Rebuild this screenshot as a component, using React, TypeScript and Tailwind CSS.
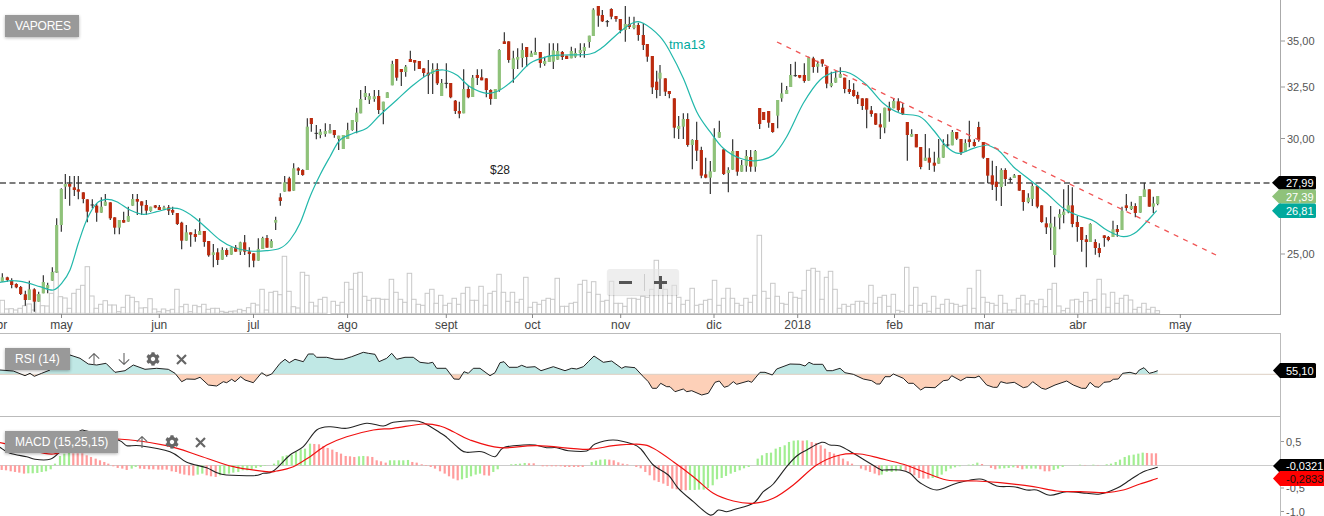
import { FaCog } from "react-icons/fa";

type P = [number, number];
const conv = (ox: number, oy: number, pts: number[]): P[] => {
  const out: P[] = [];
  for (let i = 0; i < pts.length; i += 2) out.push([ox + pts[i] / 3, oy + pts[i + 1] / 3]);
  return out;
};
const smooth = (p: P[]) => {
  let d = `M${p[0][0].toFixed(1)} ${p[0][1].toFixed(1)}`;
  for (let i = 0; i < p.length - 1; i++) {
    const a = p[i - 1] || p[i], b = p[i], c = p[i + 1], e = p[i + 2] || c;
    const c1x = b[0] + (c[0] - a[0]) / 6, c1y = b[1] + (c[1] - a[1]) / 6;
    const c2x = c[0] - (e[0] - b[0]) / 6, c2y = c[1] - (e[1] - b[1]) / 6;
    d += `C${c1x.toFixed(1)} ${c1y.toFixed(1)} ${c2x.toFixed(1)} ${c2y.toFixed(1)} ${c[0].toFixed(1)} ${c[1].toFixed(1)}`;
  }
  return d;
};
const poly = (p: P[]) => p.map((q) => q[0].toFixed(1) + "," + q[1].toFixed(1)).join(" ");

// candles: zoomX, bodyTop, bodyBottom, wickTop, wickBottom, kind (1 green, 0 red, 2 doji)
const C1 = [[7,352,365,340,365,1],[22,352,360,350,365,0],[35,362,375,355,385,0],[49,372,382,370,385,0],[62,381,402,378,405,0],[76,403,420,392,437,0],[88,388,420,362,420,1],[103,388,425,385,455,0],[116,402,425,395,425,1],[130,366,400,346,400,1],[143,375,385,368,400,1],[157,336,362,322,362,1],[170,195,338,175,338,1],[184,87,195,85,215,1],[196,72,80,42,117,1],[209,72,80,48,137,0],[223,82,90,48,108,0],[235,88,95,48,118,0],[250,97,117,97,130,0],[262,118,155,118,187,0],[277,135,135,118,145,2],[290,137,158,130,185,0],[304,140,158,112,158,1],[316,125,137,102,137,1],[331,127,175,127,180,0],[344,172,203,172,223,0],[358,180,203,180,223,1],[371,180,188,155,188,0],[385,168,185,140,185,1],[398,117,137,102,137,1],[412,117,125,102,165,0],[425,124,137,124,165,0],[439,135,152,120,165,0],[452,140,153,140,155,1],[466,136,143,135,145,0],[478,141,150,135,150,0],[492,142,148,137,150,1],[506,142,152,135,165,0],[518,150,158,140,165,0],[532,159,192,159,195,0],[545,188,242,185,268,0],[559,217,242,195,242,1],[572,217,224,217,260,0],[586,222,231,208,245,0],[599,213,225,175,225,1],[613,213,246,213,260,0],[626,243,286,243,290,0],[640,277,285,252,322,1],[653,277,300,265,315,0],[667,270,299,262,299,1],[680,270,285,265,290,0],[694,262,284,262,284,1],[707,262,275,255,275,0],[721,247,275,245,285,1],[734,247,275,225,285,0],[748,274,282,262,322,0],[761,280,302,280,322,0],[775,267,302,235,302,1],[788,234,267,230,267,1],[801,234,263,225,263,0],[814,243,263,238,263,1],[827,180,188,170,210,1],[841,112,123,100,137,0],[854,67,95,48,95,1],[868,55,94,50,94,0],[881,25,92,10,92,1],[895,25,32,22,45,0],[908,30,45,28,47,0]];
const C1b = [[922,380,510,355,510,1],[934,354,372,354,395,0],[949,400,400,375,418,2],[961,395,405,387,415,1],[976,393,402,370,410,1]];
const C3 = [[0,390,400,372,400,1],[13,390,405,390,413,0],[26,407,417,407,450,1],[40,405,447,405,447,1],[53,390,417,368,417,1],[67,360,390,360,392,1],[80,338,366,323,400,1],[92,297,340,270,340,1],[106,279,291,258,300,1],[118,288,299,280,312,1],[133,289,297,270,305,1],[146,288,330,270,342,0],[160,305,330,305,373,1],[172,277,294,277,294,1],[187,192,256,182,256,1],[200,177,233,177,242,0],[214,207,216,207,258,0],[227,200,216,195,230,1],[241,177,186,152,186,0],[254,180,188,180,212,0],[268,183,207,183,207,0],[281,205,219,205,230,0],[295,218,226,180,282,0],[308,208,222,190,282,1],[322,207,250,190,255,0],[335,249,288,237,288,1],[349,250,250,190,265,2],[362,249,292,249,295,0],[376,302,333,300,342,0],[388,333,341,305,355,0],[401,267,340,208,340,1],[415,267,292,255,295,0],[428,233,291,225,291,1],[442,225,234,208,255,0],[455,232,241,208,241,0],[469,235,270,235,292,0],[482,270,297,268,314,0],[496,267,297,267,297,1],[508,150,270,148,275,1],[523,124,132,97,132,0],[536,124,180,124,188,0],[550,175,207,152,248,1],[563,171,179,145,207,1],[577,150,174,130,202,1],[590,141,171,141,200,0],[604,160,171,152,171,1],[616,156,165,113,165,1],[631,156,189,156,203,0],[644,183,192,170,197,1],[658,167,186,130,186,1],[670,151,185,130,207,1],[683,153,179,130,179,1],[697,156,171,153,180,0],[710,167,177,167,177,0],[724,153,175,140,175,1],[736,159,170,145,173,1],[751,150,159,130,172,1],[763,141,153,130,173,1],[778,107,126,107,143,1],[790,29,108,25,108,1],[805,18,47,18,80,0],[817,45,64,30,66,0],[832,65,65,60,80,2],[844,27,50,25,58,0],[858,48,57,48,65,0],[871,57,90,57,100,0],[886,72,90,18,125,1],[898,72,81,50,87,0],[912,75,84,50,88,1],[925,75,105,68,122,0],[940,105,135,70,150,0],[952,132,170,132,185,0],[967,168,262,168,282,0],[980,245,270,212,295,0]];
const C4 = [[0,218,236,195,288,1],[16,235,275,235,288,0],[28,273,282,273,295,0],[43,295,383,295,415,0],[56,378,387,348,417,1],[70,357,380,340,417,1],[83,357,435,340,440,0],[97,420,435,418,508,1],[110,420,452,365,483,0],[124,450,527,440,535,0],[137,523,533,473,535,0],[151,514,533,483,582,1],[163,415,515,385,515,1],[178,396,413,362,413,1],[191,448,522,448,525,0],[205,510,519,502,577,1],[218,453,509,418,509,1],[232,453,515,453,527,0],[245,495,515,480,515,1],[259,468,497,450,515,1],[272,471,500,450,515,0],[286,453,500,450,515,1],[299,324,372,324,387,0],[311,336,360,336,360,0],[326,333,368,333,383,0],[338,369,396,369,398,0],[353,300,347,300,385,1],[365,280,295,248,305,1],[380,270,282,258,282,1],[392,225,261,192,261,1],[406,227,227,185,230,2],[419,225,233,225,235,0],[433,225,243,190,248,0],[446,172,242,170,242,1],[460,175,201,170,218,0],[473,191,200,182,218,1],[487,178,191,178,200,0],[500,201,251,198,265,0],[514,249,258,215,262,1],[527,233,248,212,248,1],[541,222,233,202,233,1],[554,233,267,233,280,0],[568,267,276,240,282,0],[581,270,288,250,290,0],[593,285,296,275,312,0],[607,295,318,295,330,0],[620,295,329,295,385,0],[634,331,342,318,350,0],[647,340,374,340,375,0],[661,373,382,340,417,0],[674,323,383,323,400,1],[688,323,332,305,365,0],[701,303,325,295,325,1],[715,304,330,295,335,0],[728,323,343,310,345,0],[742,366,405,366,482,0],[755,402,410,388,410,1],[769,402,442,402,442,0],[782,441,501,441,508,0],[796,473,482,402,482,1],[808,473,488,445,510,0],[823,488,497,455,515,0],[836,473,491,417,491,1],[850,435,473,418,473,1],[863,435,435,403,440,2],[877,396,436,390,436,1],[890,396,416,396,420,0],[903,417,457,417,465,0],[916,429,455,418,455,1],[928,418,426,362,442,0],[943,426,438,418,440,0],[956,381,420,365,425,0],[970,426,473,426,476,0],[983,474,527,474,550,0]];
const C5 = [[7,226,254,182,270,0],[19,245,261,198,302,0],[34,210,261,205,318,1],[46,210,237,205,258,0],[61,238,238,232,248,2],[73,226,234,222,234,1],[88,225,272,225,272,0],[100,270,306,270,332,0],[115,293,306,280,310,1],[127,258,297,250,318,1],[142,258,320,258,325,0],[155,316,366,316,368,0],[169,370,382,352,402,0],[182,370,383,318,450,1],[194,380,465,350,502,1],[209,342,353,328,388,1],[221,335,345,268,370,1],[235,316,337,255,340,1],[247,316,372,262,382,0],[262,366,381,348,425,0],[275,381,420,381,455,0],[289,418,426,405,502,0],[301,372,426,370,426,1],[316,426,444,418,464,0],[328,444,459,430,472,0],[343,406,414,406,440,0],[355,411,420,408,424,0],[369,388,411,362,411,1],[382,387,396,375,410,0],[396,332,390,320,390,1],[409,316,324,282,332,0],[424,318,327,305,330,1],[436,318,339,310,352,0],[451,288,338,288,338,1],[463,268,291,248,291,1],[478,268,320,268,320,0],[490,310,320,290,340,1],[503,288,312,288,316,1]];
const candles = [
  ...C1.map((c) => [0, 160, c] as const),
  ...C1b.map((c) => [0, 0, c] as const),
  ...C3.map((c) => [330, 0, c] as const),
  ...C4.map((c) => [660, 0, c] as const),
  ...C5.map((c) => [990, 100, c] as const),
];

// volume: origin x, origin y, left zoom x of first bar, tops
const volumes: [number, number, number, number[]][] = [
  [0, 160, 0, [421,447,446,450,445,437,432,450,405,437,438,400,335,410,414,445,400,388,376,320,408,445,433,422,435,435,455,442,406,412,425,444,443,416,447,455,447,452,448,388,440,433,455,436,440,433,448,445,445,454,457,454,453,448,452,443,430,435,388,450,397,394,404,289,394,440,444,337,346,427,438,418,412]],
  [330, 240, 3, [184,196,187,127,148,100,97,169,181,175,175,178,178,118,157,178,187,100,178,193,196,160,148,190,166,196,190,175,193,160,142,181,181,139,196,160,154,103,157,184,157,187,178,112,202,187,193,181,175,178,115]],
  [560, 170, 0, [409,409,400,397,343,331,367,335,373,394,391,334,400,400,409,385,385,388,379,382,358,271,337,358,400,346,382,403,391,355,406,403,391,388,331,406,385,355,385,400,406,385,397,376,196,364,385,340,379,400,403,367,382,385,361,301,295,304,388,322]],
  [830, 240, -5, [94,148,205,193,199,193,184,184,190,136,190,172,166,199,163,211,214,82,196,142,196,190,214,169,205,193,178,190,193,199,196,145,205,91,172,187,190,196]],
  [990, 100, 25, [586,610,630,630,595,586,612,602,612,598,620,568,550,618,632,625,600,598,605,577,602,598,538,582,622,577,610,595,586,600,628,622,610,628,622,632]],
];
const volBase = [460, 221, 431, 221, 640];

const tma = [
  ...conv(0, 160, [0,367,40,362,80,368,120,380,160,390,185,370,210,330,235,250,260,180,290,130,320,118,350,125,390,150,430,163,470,155,510,145,540,147,580,170,620,205,660,240,700,262,750,273,800,272,840,265,870,240,900,190,930,110,960,45]),
  ...conv(330, 0, [0,470,30,420,70,400,110,385,150,345,200,300,250,255,300,220,340,210,380,225,420,260,470,280,510,270,550,240,600,190,650,170,700,165,780,162,820,140,870,95,910,68,940,70]),
  ...conv(660, 0, [0,110,30,155,70,235,110,335,150,395,190,445,240,475,290,482,340,465,380,410,430,310,480,240,530,215,570,220,620,255,670,310,720,340,780,350,820,390,860,440,895,460,940,445,980,435]),
  ...conv(990, 100, [0,138,30,155,70,200,120,240,170,280,220,325,260,345,310,362,350,390,400,410,440,395,500,332]),
];

const rsi = [
  ...conv(0, 330, [0,120,40,123,75,137,90,130,103,139,125,130,150,120,175,80,210,75,240,85,265,102,290,105,318,100,345,127,375,122,400,105,435,118,470,115,505,118,525,130,545,155,560,147,585,148,600,142,625,165,650,168,670,155,680,158,695,148,705,155,722,140,735,150,760,158,785,128,800,138,815,132,840,100,855,88,868,98,885,88,910,95,925,72,940,72,950,82,980,82,1005,88,1030,88,1055,80,1090,67,1105,70,1125,73,1137,95,1160,85,1175,70,1190,88,1215,82,1240,82,1260,97,1285,100,1298,97,1310,115]),
  ...conv(440, 330, [0,115,18,115,42,147,58,148,72,125,85,130,100,115,120,115,150,137,165,128,180,98,192,95,207,112,232,112,245,106,260,112,285,110,303,122,340,110,375,122,395,115,410,117,430,110,445,95,462,78,490,97,515,93,545,115,555,110,585,113,610,140,625,155,637,175,650,175,662,160,680,170,690,170,705,185,730,177,740,185,755,182,785,195,805,190,825,157,838,153,853,172,865,168,880,155,890,163,925,153,935,157,960,127,975,127,997,135,1010,117,1050,102,1080,103,1095,108,1107,97,1120,103,1148,103,1160,122,1177,122,1200,115,1215,128,1240,133,1270,147,1295,152,1310,162]),
  ...conv(880, 330, [0,162,15,140,30,140,40,132,70,145,85,160,100,160,122,180,135,172,165,173,190,152,205,150,215,137,242,152,260,142,285,143,297,138,320,165,340,172,352,172,362,155,380,160,403,157,430,173,443,170,458,155,485,175,497,178,525,165,560,153,580,165,605,175,618,175,630,157,645,170,657,172,672,157,690,155,700,148,715,147,728,130,750,127,768,132,778,120,792,113,808,130,820,127,833,122]),
];

const macd = [
  ...conv(0, 330, [0,352,30,370,80,380,105,388,150,388,175,370,205,330,240,303,260,303,355,330,380,347,420,347,510,365,560,397,620,413,665,433,760,437,790,430,820,423,870,375,910,350,950,300,990,290,1040,295,1100,280,1150,288,1180,277,1240,272,1270,278]),
  ...conv(440, 330, [0,308,20,322,60,358,80,367,125,365,165,380,190,353,250,345,285,345,320,353,350,353,385,362,440,363,465,342,520,330,580,343,605,360,640,405,685,435,715,475,760,515,810,555,835,540,860,545,885,538,940,520,970,485,1000,462,1040,410,1070,378,1100,360,1145,337,1170,345,1200,348,1240,370]),
  ...conv(880, 330, [0,418,10,420,60,420,90,430,120,458,170,480,230,460,300,447,350,468,400,470,440,480,470,480,510,496,560,485,620,490,660,492,710,475,750,450,790,425,833,412]),
];
const signal = [
  ...conv(0, 330, [0,338,80,355,160,372,250,340,353,327,500,347,600,378,700,410,800,425,830,423,880,410,930,380,980,345,1040,320,1120,300,1180,295,1270,282]),
  ...conv(440, 330, [0,288,40,305,90,330,180,353,290,347,440,358,520,347,600,343,640,355,700,395,760,440,820,490,880,513,940,520,1000,505,1060,465,1130,405,1200,375,1260,372]),
  ...conv(880, 330, [0,385,70,403,130,425,200,450,290,453,360,458,460,470,530,483,600,485,680,488,730,480,780,462,833,445]),
];

const hist: P[] = [
  ...conv(0, 0, [5,-14,18,-15,32,-18,45,-20,58,-22,72,-25,85,-24,98,-24,112,-23,125,-20,138,-18,152,-12,165,5,180,28,193,35,207,37,220,36,233,36,247,36,260,30,273,25,287,20,300,15,313,10,325,5,340,-3,353,-8,367,-10,380,-14,395,-10,407,-5,420,-10,433,-11,447,-12,460,-12,475,-13,487,-13,500,-13,515,-18,528,-20,540,-25,553,-28,567,-30,580,-31,593,-28,607,-25,620,-30,633,-33,647,-35,660,-30,673,-28,687,-25,700,-22,715,-20,728,-15,742,-15,755,-12,768,-8,782,-5,795,-2,822,5,835,15,848,27,860,30,875,32,888,40,902,48,915,50,930,65,943,64,957,63,970,58,983,52,997,47,1010,40,1023,35,1037,28,1050,27,1063,25,1077,27,1090,28,1103,27,1117,25,1130,15,1143,12,1157,8,1170,15,1183,15,1197,15,1210,15,1224,16,1237,10,1250,8,1265,3,1278,-2,1292,-5,1305,-10]),
  ...conv(440, 0, [0,-18,14,-25,27,-33,40,-40,53,-45,66,-42,80,-38,93,-33,107,-28,120,-25,133,-30,147,-31,160,-20,173,-12,214,3,227,4,240,5,254,7,267,6,281,6,308,-3,321,-3,335,-3,348,-3,362,-3,375,-5,388,-5,402,-5,415,-5,428,-5,455,10,468,14,481,17,495,18,508,17,521,15,535,9,548,5,562,3,589,-5,602,-9,616,-20,629,-30,643,-45,656,-50,670,-55,683,-62,697,-70,710,-72,724,-74,737,-75,750,-74,764,-74,777,-73,791,-73,804,-68,818,-60,831,-42,845,-38,858,-32,872,-25,885,-20,899,-15,912,-9,926,-5,953,20,966,30,980,37,993,38,1007,50,1020,55,1034,60,1047,70,1061,74,1074,75,1088,74,1101,75,1115,70,1128,67,1142,60,1155,50,1169,40,1182,35,1196,30,1209,20,1223,12,1236,5,1263,-10,1277,-15,1290,-20,1304,-25,1317,-30]),
  ...conv(880, 0, [5,-28,20,-20,35,-20,48,-18,62,-15,77,-16,90,-22,103,-30,117,-38,130,-40,145,-40,158,-38,172,-35,185,-28,198,-18,212,-10,225,-6,239,-3,266,2,279,3,292,8,306,4,333,-8,346,-12,359,-10,373,-9,386,-8,400,-6,413,-8,427,-12,440,-10,454,-10,467,-10,481,-12,494,-18,508,-18,521,-14,534,-10,548,-5,600,2,615,1,640,2,654,1,680,3,693,5,707,10,720,17,734,25,747,30,761,32,775,35,788,38,801,37,815,36,828,36]),
];

const months: [string, number][] = [["abr",-1.5],["may",61.5],["jun",159.3],["jul",253.5],["ago",347.6],["sept",446.3],["oct",532.5],["nov",620.7],["dic",714],["2018",797.7],["feb",894.5],["mar",984.5],["abr",1077.8],["may",1180.3]];
const prices: [string, number][] = [["35,00",41],["32,50",87],["30,00",138.5],["25,00",254]];
const macdTicks: [string, number][] = [["0,5",441.5],["-0,5",488],["-1,0",511.5]];

const Tag = ({ y, h, end, fill, text, tc = "#fff", tip = 1272 }: any) => {
  const m = y + h / 2;
  return (
    <g>
      <path d={`M${tip} ${m}L${tip + 7} ${y}H${end - 1.5}Q${end} ${y} ${end} ${y + 1.5}V${y + h - 1.5}Q${end} ${y + h} ${end - 1.5} ${y + h}H${tip + 7}Z`} fill={fill} />
      <text x={1286} y={m + 4} fontSize={11} fill={tc}>{text}</text>
    </g>
  );
};

const ArrowUpI = () => (
  <svg viewBox="0 0 12 12" className="w-3 h-3" fill="none" stroke="#666" strokeWidth="1.1">
    <path d="M6 .6V12M.8 5.6 6 .6l5.2 5" />
  </svg>
);
const ArrowDownI = () => (
  <svg viewBox="0 0 12 12" className="w-3 h-3" fill="none" stroke="#666" strokeWidth="1.1">
    <path d="M6 0V11.4M.8 6.4 6 11.4l5.2-5" />
  </svg>
);
const CloseI = () => (
  <svg viewBox="0 0 11 11" className="w-[11px] h-[11px]" fill="none" stroke="#666" strokeWidth="2.2">
    <path d="M1 1l9 9M10 1l-9 9" />
  </svg>
);
const Label = ({ children, tight }: any) => (
  <div className={tight ? "bg-[#999] text-white text-[12px] leading-[16px] pl-[10px] pr-[8px] py-[3px] tracking-[-0.2px] shadow-[0_1px_3px_rgba(0,0,0,0.3)] whitespace-nowrap" : "bg-[#999] text-white text-[12px] leading-[16px] px-[10px] py-[3px] shadow-[0_1px_3px_rgba(0,0,0,0.3)] whitespace-nowrap"}>{children}</div>
);

export default function App() {
  return (
    <div className="relative w-[1324px] h-[516px] overflow-hidden bg-white font-['Liberation_Sans',Arial,sans-serif]">
      <div className="h-[333px] relative">
        <div className="w-[1281px] h-[315px] border-r border-b border-[#aaa]" />
        <svg className="absolute inset-0" width={1324} height={333} viewBox="0 0 1324 333" fontFamily="'Liberation Sans', Arial, sans-serif">
          {volumes.map(([ox, oy, s, tops], si) =>
            tops.map((t, k) => {
              const y = oy + t / 3;
              const base = oy + volBase[si] / 3;
              return <rect key={si + "-" + k} x={(ox + (s + k * 13.44) / 3).toFixed(1)} y={y.toFixed(1)} width={4.48} height={Math.max(0, base - y).toFixed(1)} fill="#fff" stroke="#c8c8c8" strokeWidth={1} />;
            })
          )}
          <line x1={0} x2={1273} y1={183} y2={183} stroke="#7c7c7c" strokeWidth={2} strokeDasharray="6 3.5" />
          {candles.map(([ox, oy, c], i) => {
            const x = ox + (c[0] as number) / 3;
            const col = c[5] === 1 ? "#8fc27a" : "#bb2a0e";
            return (
              <g key={i}>
                <line x1={x} x2={x} y1={oy + (c[3] as number) / 3} y2={oy + (c[4] as number) / 3} stroke="#333" strokeWidth={1.2} />
                {c[5] === 2 ? (
                  <line x1={x - 1.8} x2={x + 1.8} y1={oy + (c[1] as number) / 3} y2={oy + (c[1] as number) / 3} stroke="#333" strokeWidth={1} />
                ) : (
                  <rect x={x - 1.6} width={3.2} y={oy + (c[1] as number) / 3} height={((c[2] as number) - (c[1] as number)) / 3} fill={col} />
                )}
              </g>
            );
          })}
          <path d={smooth(tma)} fill="none" stroke="#22b8ab" strokeWidth={1.2} />
          <line x1={777} y1={42} x2={1216} y2={255} stroke="#f05555" strokeWidth={1.3} strokeDasharray="5 5.5" />
          <text x={490} y={174} fontSize={12} fill="#222">$28</text>
          <text x={669} y={49} fontSize={13} fill="#00a99d">tma13</text>
          {months.map(([m, x], i) => (
            <g key={i}>
              <line x1={x} x2={x} y1={314} y2={318} stroke="#888" />
              <text x={x} y={329} fontSize={12} fill="#444" textAnchor="middle">{m}</text>
            </g>
          ))}
          {prices.map(([p, y]) => (
            <g key={p}>
              <line x1={1281} x2={1285} y1={y} y2={y} stroke="#999" />
              <text x={1287} y={y + 4} fontSize={11} fill="#555">{p}</text>
            </g>
          ))}
          <Tag y={176} h={13.5} end={1316} fill="#000" text="27,99" />
          <Tag y={189.5} h={14} end={1316} fill="#8fc27a" text="27,39" />
          <Tag y={203.5} h={14.5} end={1316} fill="#00a99d" text="26,81" />
        </svg>
        <div className="absolute left-[5px] top-[15px]"><Label tight>VAPORES</Label></div>
        <div className="absolute left-[607px] top-[269px] w-[72px] h-[26px] bg-[#e2e2e2]/60 rounded-[3px] shadow-[0_1px_1px_rgba(0,0,0,0.12)] flex items-center pl-[12px]">
          <div className="w-[13px] h-[3px] bg-[#555]" />
          <div className="ml-[12px] w-px h-[17px] bg-[#ccc]" />
          <div className="ml-[9px] relative w-[13px] h-[13px]">
            <div className="absolute left-0 top-[5px] w-[13px] h-[3px] bg-[#555]" />
            <div className="absolute left-[5px] top-0 w-[3px] h-[13px] bg-[#555]" />
          </div>
        </div>
      </div>

      <div className="h-[83px] relative">
        <div className="w-[1281px] h-[84px] border-t border-r border-[#bbb]" />
        <svg className="absolute inset-0" width={1324} height={83} viewBox="0 333 1324 83" fontFamily="'Liberation Sans', Arial, sans-serif">
          <defs>
            <clipPath id="rsiUp"><rect x={0} y={333} width={1280} height={41.3} /></clipPath>
            <clipPath id="rsiDown"><rect x={0} y={374.3} width={1280} height={42} /></clipPath>
          </defs>
          <polygon points={`0,374.3 ${poly(rsi)} ${rsi[rsi.length - 1][0].toFixed(1)},374.3`} fill="#c0e8e5" clipPath="url(#rsiUp)" />
          <polygon points={`0,374.3 ${poly(rsi)} ${rsi[rsi.length - 1][0].toFixed(1)},374.3`} fill="#fdd0b8" clipPath="url(#rsiDown)" />
          <line x1={0} x2={1280} y1={374.3} y2={374.3} stroke="#dccfc2" />
          <polyline points={poly(rsi)} fill="none" stroke="#222" strokeWidth={1} />
          <Tag y={363} h={15} end={1316} fill="#000" text="55,10" tip={1273} />
        </svg>
        <div className="absolute left-[5px] top-[15px] flex items-center">
          <Label>RSI (14)</Label>
          <div className="ml-[18px]"><ArrowUpI /></div>
          <div className="ml-[18px]"><ArrowDownI /></div>
          <FaCog className="ml-[16px] text-[#666] text-[14px]" />
          <div className="ml-[16px]"><CloseI /></div>
        </div>
      </div>

      <div className="h-[100px] relative">
        <div className="w-[1281px] h-[100px] border-t border-r border-[#bbb]" />
        <svg className="absolute inset-0" width={1324} height={100} viewBox="0 416 1324 100" fontFamily="'Liberation Sans', Arial, sans-serif">
          <line x1={0} x2={1280} y1={465.5} y2={465.5} stroke="#ccc" />
          {hist.map((h, i) => {
            const v = h[1];
            let up = v > (i ? hist[i - 1][1] : v);
            if (i && v === hist[i - 1][1]) {
              let j = i - 1;
              while (j > 0 && hist[j][1] === hist[j - 1][1]) j--;
              up = j > 0 ? hist[j][1] > hist[j - 1][1] : false;
            }
            return <rect key={i} x={(h[0] - 1.1).toFixed(1)} width={2.2} y={v > 0 ? 465.3 - v : 465.3} height={Math.abs(v)} fill={up ? "#a2ee92" : "#ff9c9c"} />;
          })}
          <path d={smooth(macd)} fill="none" stroke="#222" strokeWidth={1.1} />
          <path d={smooth(signal)} fill="none" stroke="#f01010" strokeWidth={1.2} />
          {macdTicks.map(([t, y]) => (
            <g key={t}>
              <line x1={1281} x2={1284} y1={y} y2={y} stroke="#999" />
              <text x={1286} y={y + 4} fontSize={11} fill="#555" >{t}</text>
            </g>
          ))}
          <Tag y={459} h={14} end={1326} fill="#000" text="-0,0321" tip={1273} />
          <Tag y={471} h={15} end={1326} fill="#ff0000" text="-0,2833" tc="#111" tip={1273} />
        </svg>
        <div className="absolute left-[5px] top-[15px] flex items-center">
          <Label>MACD (15,25,15)</Label>
          <div className="ml-[18px]"><ArrowUpI /></div>
          <FaCog className="ml-[17px] text-[#666] text-[14px]" />
          <div className="ml-[16px]"><CloseI /></div>
        </div>
      </div>
    </div>
  );
}
